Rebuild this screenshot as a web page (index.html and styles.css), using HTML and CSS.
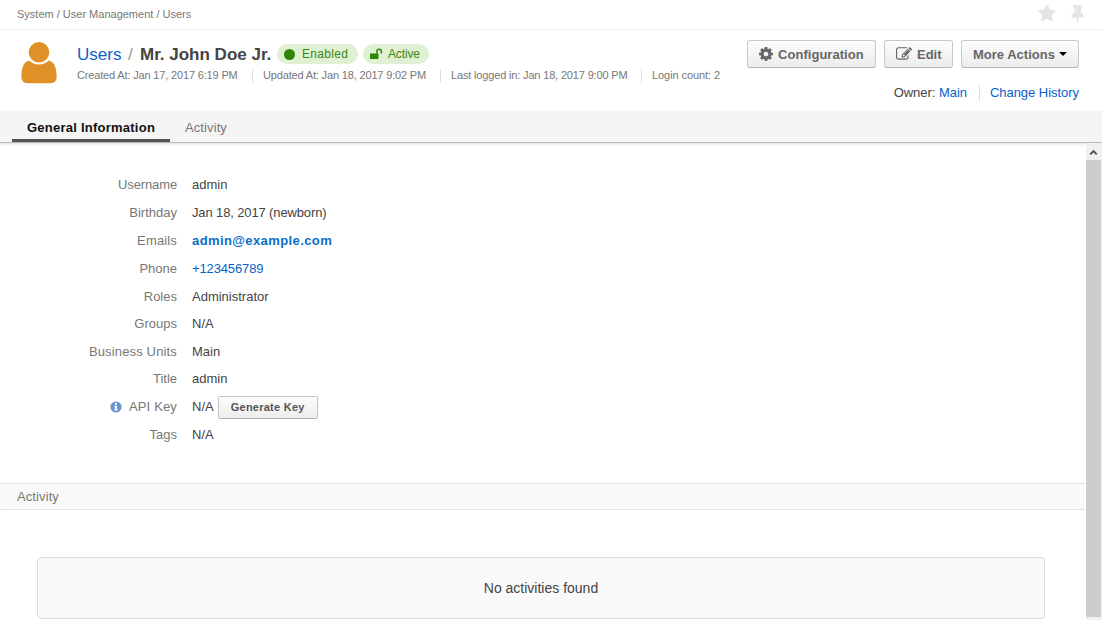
FILE: index.html
```html
<!DOCTYPE html>
<html lang="en">
<head>
<meta charset="utf-8">
<title>Mr. John Doe Jr. - Users</title>
<link rel="stylesheet" href="styles.css">
</head>
<body>
<div class="breadcrumbs">
  <span class="crumbs">System / User Management / Users</span>
  <div class="page-tools">
    <svg class="star" viewBox="64 128 1664 1536"><path d="M1728 647q0 22-26 48l-363 354 86 500q1 7 1 20 0 21-10.500 35.500t-30.500 14.500q-19 0-40-12l-449-236-449 236q-22 12-40 12-21 0-31.500-14.500t-10.500-35.500q0-6 2-20l86-500-364-354q-25-27-25-48 0-37 56-46l502-73 225-455q19-41 49-41t49 41l225 455 502 73q56 9 56 46z"/></svg>
    <svg class="pin" viewBox="320 128 1152 1664"><path d="M800 864v-448q0-14-9-23t-23-9-23 9-9 23v448q0 14 9 23t23 9 23-9 9-23zm672 352q0 26-19 45t-45 19h-429l-51 483q-2 12-10.500 20.500t-20.500 8.500h-1q-27 0-32-27l-76-485h-404q-26 0-45-19t-19-45q0-123 78.500-221.500t177.500-98.500v-512q-52 0-90-38t-38-90 38-90 90-38h640q52 0 90 38t38 90-38 90-90 38v512q99 0 177.500 98.500t78.500 221.500z"/></svg>
  </div>
</div>
<header class="user-header">
  <svg class="avatar" viewBox="0 0 36 42"><circle cx="18" cy="10.300" r="10.300"/><path d="M8.300 18.500C11 21.300 14.300 22.600 18 22.600S25 21.300 27.700 18.500C33.500 19.500 35.600 26 35.600 34.500C35.600 39 33.500 41.200 29.500 41.200H6.500C2.500 41.200.4 39 .4 34.500C.4 26 2.500 19.500 8.300 18.500Z"/></svg>
  <div class="identity">
    <div class="title-row">
      <a class="title-link">Users</a><span class="slash">/</span><h1 class="user-name">Mr. John Doe Jr.</h1>
      <span class="badge enabled"><i class="dot"></i>Enabled</span>
      <span class="badge active"><svg class="unlock" viewBox="0 0 13 12"><path d="M0 5.500h8.500V11H0z"/><path class="shackle" d="M6.900 5.500V3.500a2.200 2.200 0 0 1 4.400 0V5.500"/></svg>Active</span>
    </div>
    <div class="meta-row">
      <span class="meta created">Created At: Jan 17, 2017 6:19 PM</span>
      <span class="meta updated">Updated At: Jan 18, 2017 9:02 PM</span>
      <span class="meta logged">Last logged in: Jan 18, 2017 9:00 PM</span>
      <span class="meta count">Login count: 2</span>
    </div>
  </div>
  <div class="side">
    <div class="actions">
      <a class="btn config"><svg class="cog" viewBox="128 128 1536 1536"><path d="M1152 896q0-106-75-181t-181-75-181 75-75 181 75 181 181 75 181-75 75-181zm512-109v222q0 12-8 23t-20 13l-185 28q-19 54-39 91 35 50 107 138 10 12 10 25t-9 23q-27 37-99 108t-94 71q-12 0-26-9l-138-108q-44 23-91 38-16 136-29 186-7 28-36 28h-222q-14 0-24.500-8.500t-11.500-21.500l-28-184q-49-16-90-37l-141 107q-10 9-25 9-14 0-25-11-126-114-165-168-7-10-7-23 0-12 8-23 15-21 51-66.500t54-70.500q-27-50-41-99l-183-27q-13-2-21-12.500t-8-23.500v-222q0-12 8-23t19-13l186-28q14-46 39-92-40-57-107-138-10-12-10-24 0-10 9-23 26-36 98.500-107.500t94.500-71.500q13 0 26 10l138 107q44-23 91-38 16-136 29-186 7-28 36-28h222q14 0 24.500 8.500t11.500 21.500l28 184q49 16 90 37l142-107q9-9 24-9 13 0 25 10 129 119 165 170 7 8 7 22 0 12-8 23-15 21-51 66.500t-54 70.500q26 50 41 98l183 28q13 2 21 12.500t8 23.500z"/></svg><span>Configuration</span></a>
      <a class="btn edit"><svg class="pencil" viewBox="0 128 1792 1536"><path d="M888 1184l116-116-152-152-116 116v56h96v96h56zm440-720q-16-16-33 1l-350 350q-17 17-1 33t33-1l350-350q17-17 1-33zm80 594v190q0 119-84.500 203.500t-203.500 84.500h-832q-119 0-203.500-84.500t-84.500-203.500v-832q0-119 84.500-203.500t203.500-84.500h832q63 0 117 25 15 7 18 23 3 17-9 29l-49 49q-14 14-32 8-23-6-45-6h-832q-66 0-113 47t-47 113v832q0 66 47 113t113 47h832q66 0 113-47t47-113v-126q0-13 9-22l64-64q15-15 35-7t20 29zm-96-738l288 288-672 672h-288v-288zm444 132l-92 92-288-288 92-92q28-28 68-28t68 28l152 152q28 28 28 68t-28 68z"/></svg><span>Edit</span></a>
      <a class="btn more"><span>More Actions</span><i class="caret"></i></a>
    </div>
    <div class="owner-row"><span>Owner: <a class="link">Main</a></span><a class="link history">Change History</a></div>
  </div>
</header>
<nav class="tabs">
  <a class="tab current"><span>General Information</span></a>
  <a class="tab"><span>Activity</span></a>
</nav>
<div class="scroll-area">
  <main class="content">
    <dl class="fields">
      <dt class="snug">Username</dt><dd>admin</dd>
      <dt>Birthday</dt><dd class="snug">Jan 18, 2017 (newborn)</dd>
      <dt class="loose">Emails</dt><dd><a class="email">admin@example.com</a></dd>
      <dt>Phone</dt><dd class="snug"><a class="link">+123456789</a></dd>
      <dt>Roles</dt><dd>Administrator</dd>
      <dt>Groups</dt><dd>N/A</dd>
      <dt class="loose">Business Units</dt><dd>Main</dd>
      <dt>Title</dt><dd>admin</dd>
      <dt class="loose"><svg class="info" viewBox="0 0 12 12"><circle cx="6" cy="6" r="5.600"/><path d="M5 2h2v1.700H5zM4.300 4.700H7v3.500h.8v1.200H4.300V8.200h.8V5.900h-.8z"/></svg>API Key</dt><dd>N/A<button class="generate">Generate Key</button></dd>
      <dt>Tags</dt><dd>N/A</dd>
    </dl>
    <h2 class="section-title">Activity</h2>
    <div class="empty"><span>No activities found</span></div>
  </main>
  <div class="scrollbar">
    <svg class="arrow" viewBox="0 0 15 17"><path d="M4 11L7.500 7.500L11 11"/></svg>
    <div class="thumb"></div>
  </div>
</div>
</body>
</html>
```
FILE: styles.css
```css
* { box-sizing: border-box; }
body {
  margin: 0;
  width: 1102px;
  height: 620px;
  overflow: hidden;
  display: flex;
  flex-direction: column;
  background: #fff;
  color: #444;
  font: 13px/18px "Liberation Sans", Arial, sans-serif;
}
svg { display: block; flex: none; }
.link { color: #0a5fcb; }

.breadcrumbs {
  height: 30px;
  flex: none;
  display: flex;
  justify-content: space-between;
  padding: 5px 18px 0 17px;
  border-bottom: 1px solid #eee;
  color: #777;
  font-size: 11px;
}
.page-tools { display: flex; gap: 15px; fill: #e4e4e4; }
.star { width: 18px; height: 17px; }
.pin { width: 13px; height: 18px; }

.user-header { height: 81px; flex: none; display: flex; padding: 10px 23px 0 21px; }
.avatar { width: 36px; height: 42px; margin-top: 2px; fill: #df9128; }
.identity { margin-left: 20px; }
.title-row { display: flex; align-items: center; height: 28px; line-height: 20px; }
.title-link, .slash, .user-name { padding-top: 1px; }
.title-link { color: #0a5fcb; font-size: 17px; width: 44px; }
.slash { color: #999; font-size: 17px; width: 19px; padding-left: 7px; }
.user-name { margin: 0; font-size: 17px; width: 137px; white-space: nowrap; }
.badge {
  display: flex;
  align-items: center;
  height: 20px;
  border-radius: 10px;
  background: #dff0d3;
  color: #3c8617;
  font-size: 12px;
}
.enabled { width: 81px; padding-left: 7px; letter-spacing: .3px; }
.active { width: 66px; margin-left: 5px; padding-left: 7px; letter-spacing: -.15px; }
.dot { width: 11px; height: 11px; margin-right: 7px; border-radius: 50%; background: #2f8505; }
.unlock { width: 13px; height: 12px; margin-right: 5px; fill: #2f8505; }
.shackle { fill: none; stroke: #2f8505; stroke-width: 1.5; }
.meta-row { display: flex; height: 14px; margin-top: 1px; color: #777; font-size: 11px; line-height: 13px; letter-spacing: -.16px; white-space: nowrap; }
.meta + .meta { border-left: 1px solid #ddd; padding-left: 10px; }
.created { width: 175px; }
.updated { width: 188px; }
.logged { width: 201px; }
.count { letter-spacing: -.07px; }

.side { margin-left: auto; }
.actions { display: flex; gap: 8px; }
.btn {
  display: flex;
  align-items: center;
  height: 28px;
  padding-left: 11px;
  border: 1px solid #c8c8c8;
  border-bottom-color: #b5b5b5;
  border-radius: 3px;
  background: linear-gradient(#fdfdfd, #ececec);
  color: #666;
  fill: #666;
  font-size: 13px;
  font-weight: bold;
  white-space: nowrap;
}
.btn span { padding-top: 1px; }
.config { width: 129px; letter-spacing: .04px; }
.edit { width: 69px; }
.more { width: 118px; }
.cog { width: 14px; height: 14px; margin-right: 5px; }
.pencil { width: 16px; height: 14px; margin-right: 5px; }
.caret { margin-left: 4px; border: 4px solid transparent; border-top-color: #000; border-bottom: 0; }
.owner-row { display: flex; justify-content: flex-end; margin-top: 17px; line-height: 16px; letter-spacing: -.04px; }
.history { margin-left: 12px; padding-left: 10px; border-left: 1px solid #ddd; }

.tabs {
  height: 32px;
  flex: none;
  display: flex;
  padding-left: 12px;
  background: #f5f5f5;
  border-bottom: 1px solid #bbb;
}
.tab { height: 31px; padding: 8px 15px 0; color: #777; letter-spacing: .1px; }
.current { width: 158px; color: #111; font-weight: bold; letter-spacing: .24px; white-space: nowrap; border-bottom: 3px solid #555; }

.scroll-area { flex: 1; display: flex; }
.content { width: 1085px; box-shadow: inset 0 3px 3px -2px #ddd; }
.fields {
  margin: 0;
  padding-top: 28px;
  height: 340px;
  display: grid;
  grid-template-columns: 177px 1fr;
  column-gap: 15px;
  grid-template-rows: repeat(4, 28px) 27px 28px 27px 28px 28px 28px;
}
.fields dt, .fields dd { margin: 0; display: flex; align-items: center; white-space: nowrap; }
.fields dt { justify-content: flex-end; color: #777; }
.fields .snug { letter-spacing: -.13px; }
.fields .loose { letter-spacing: .15px; }
.email { color: #0a6ec8; font-weight: bold; letter-spacing: .4px; }
.info { width: 12px; height: 12px; margin-right: 7px; fill: #6b93d1; }
.info path { fill: #fff; }
.generate {
  width: 100px;
  height: 23px;
  margin-left: 4px;
  padding: 0;
  border: 1px solid #c4c4c4;
  border-bottom-color: #b0b0b0;
  border-radius: 2px;
  background: linear-gradient(#fdfdfd, #ececec);
  color: #555;
  font: bold 11px "Liberation Sans", Arial, sans-serif;
  letter-spacing: .25px;
}
.section-title {
  margin: 0;
  height: 27px;
  padding: 4px 17px;
  border: solid #e1e1e1;
  border-width: 1px 0;
  background: #fafafa;
  color: #777;
  font-size: 13px;
  font-weight: normal;
  letter-spacing: .1px;
}
.empty {
  width: 1008px;
  height: 62px;
  margin: 47px 0 0 37px;
  display: flex;
  align-items: center;
  justify-content: center;
  border: 1px solid #ddd;
  border-radius: 4px;
  background: #f9f9f9;
  font-size: 14px;
}
.scrollbar { width: 16px; margin-left: 1px; padding-top: 1px; background: #f0f0f0; }
.arrow { width: 15px; height: 16px; fill: none; stroke: #505050; stroke-width: 2; }
.thumb { width: 15px; height: 457px; background: #cdcdcd; }
```
